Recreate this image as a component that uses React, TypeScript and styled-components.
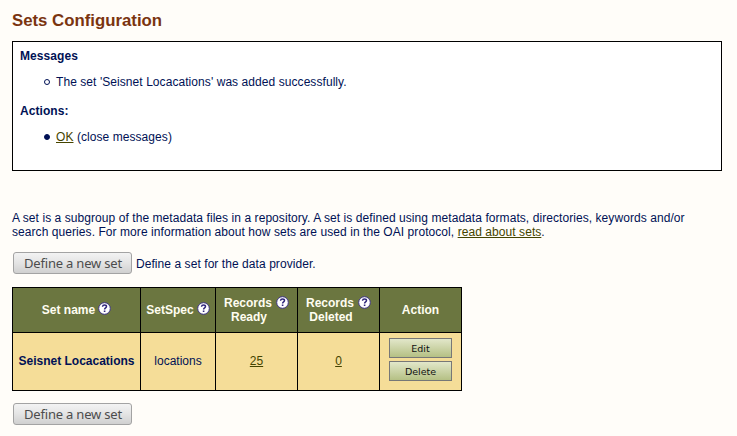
import React from 'react';
import styled, { createGlobalStyle } from 'styled-components';

const GlobalStyle = createGlobalStyle`
  body {
    margin: 0;
    background: #fffdf9;
    color: #001155;
    font: 12px/14px "Liberation Sans", Arial, sans-serif;
    letter-spacing: 0.066px;
  }
`;

const Page = styled.main`
  box-sizing: border-box;
  width: 737px;
  height: 436px;
  padding: 11px 15px 0 12px;
  overflow: hidden;
`;

const Title = styled.h1`
  margin: 0;
  height: 30px;
  font-size: 16.8px;
  line-height: 20px;
  letter-spacing: 0;
  color: #7a3410;
  white-space: nowrap;
`;

const MessageBox = styled.section`
  box-sizing: border-box;
  height: 130px;
  padding: 7px;
  border: 1px solid #000;
  background: #fff;
`;

const BoxHeading = styled.h2`
  margin: 0;
  font-size: 12px;
  line-height: 14px;
`;

const BulletList = styled.ul`
  display: flex;
  margin: 12px 0 15px;
  padding: 0 0 0 23px;
  list-style: none;
`;

const BulletItem = styled.li<{ $filled?: boolean }>`
  display: flex;
  align-items: center;
  white-space: pre;

  &::before {
    content: '';
    box-sizing: border-box;
    width: 6px;
    height: 6px;
    margin: 0 6px 0 1px;
    border: 1px solid #001155;
    border-radius: 50%;
    background: ${(p) => (p.$filled ? '#001155' : 'transparent')};
  }
`;

const Link = styled.a`
  color: #444400;
  text-decoration: underline;
`;

const Intro = styled.p`
  margin: 40px 0 13px;
  white-space: nowrap;
`;

const ActionRow = styled.div`
  display: flex;
  align-items: center;
  gap: 4px;
  height: 22px;
  padding-left: 1px;
`;

const ActionHint = styled.span`
  padding-top: 2px;
`;

const DefineButton = styled.button`
  box-sizing: border-box;
  width: 119px;
  height: 22px;
  padding: 1px 0 0 1px;
  border: 1px solid #a3a3a3;
  border-radius: 3px;
  background: linear-gradient(#f3f3f3, #e4e4e4 50%, #d0d0d0);
  color: #4c4c4c;
  font: 13px/19px "Noto Sans", sans-serif;
  letter-spacing: -0.2px;
  white-space: nowrap;
`;

const SetsTable = styled.div`
  display: grid;
  grid-template-columns: 127px 74px 81px 81px 81px;
  grid-template-rows: 44px 57px;
  gap: 1px;
  box-sizing: border-box;
  width: 450px;
  margin: 13px 0 12px;
  border: 1px solid #000;
  background: #000;
`;

const HeaderCell = styled.div`
  display: flex;
  align-items: center;
  justify-content: center;
  background: #6b7640;
  color: #fffdf0;
  font-weight: bold;
  letter-spacing: 0;
  white-space: nowrap;
`;

const HeaderLabel = styled.div<{ $raised?: boolean }>`
  text-align: center;

  svg {
    display: inline-block;
    margin: -4px 0 -1px ${(p) => (p.$raised ? 3 : 4)}px;
    vertical-align: ${(p) => (p.$raised ? '0' : '-1px')};
  }
`;

const SecondLine = styled.span`
  display: block;
  padding-right: 15px;
`;

const Cell = styled.div<{ $bold?: boolean }>`
  display: flex;
  flex-direction: column;
  align-items: center;
  justify-content: center;
  gap: 3px;
  padding-bottom: 2px;
  background: #f5dd98;
  font-weight: ${(p) => (p.$bold ? 'bold' : 'normal')};
  letter-spacing: 0;
  white-space: nowrap;
`;

const ActionCell = styled(Cell)`
  justify-content: flex-start;
  padding-top: 5px;
`;

const SmallButton = styled.button`
  box-sizing: border-box;
  width: 63px;
  height: 20px;
  padding: 1px 0 0;
  border: 1px solid #777;
  background: linear-gradient(#e2e7ca, #b5c084);
  color: #111;
  font: 9.5px/17px "DejaVu Sans", sans-serif;
`;

const HelpIcon = () => (
  <svg width="13" height="13" viewBox="0 0 13 13" aria-hidden="true">
    <circle cx="6.5" cy="6.5" r="5.8" fill="#fff" stroke="#40358a" strokeWidth="1" />
    <path d="M4.5 4.7C4.6 3.5 5.3 3 6.5 3S8.5 3.6 8.5 4.6C8.5 5.9 6.6 5.9 6.6 7.5" fill="none" stroke="#30277c" strokeWidth="1.5" />
    <rect x="5.8" y="8.5" width="1.6" height="1.5" fill="#30277c" />
  </svg>
);

export default function App() {
  return (
    <>
      <GlobalStyle />
      <Page>
        <Title>Sets Configuration</Title>
        <MessageBox>
          <BoxHeading>Messages</BoxHeading>
          <BulletList>
            <BulletItem>The set 'Seisnet Locacations' was added successfully.</BulletItem>
          </BulletList>
          <BoxHeading>Actions:</BoxHeading>
          <BulletList>
            <BulletItem $filled><Link>OK</Link> (close messages)</BulletItem>
          </BulletList>
        </MessageBox>
        <Intro>
          A set is a subgroup of the metadata files in a repository. A set is defined using metadata formats, directories, keywords and/or
          <br />
          search queries. For more information about how sets are used in the OAI protocol, <Link>read about sets</Link>.
        </Intro>
        <ActionRow>
          <DefineButton>Define a new set</DefineButton>
          <ActionHint>Define a set for the data provider.</ActionHint>
        </ActionRow>
        <SetsTable>
          <HeaderCell><HeaderLabel $raised>Set name<HelpIcon /></HeaderLabel></HeaderCell>
          <HeaderCell><HeaderLabel $raised>SetSpec<HelpIcon /></HeaderLabel></HeaderCell>
          <HeaderCell><HeaderLabel>Records<HelpIcon /><SecondLine>Ready</SecondLine></HeaderLabel></HeaderCell>
          <HeaderCell><HeaderLabel>Records<HelpIcon /><SecondLine>Deleted</SecondLine></HeaderLabel></HeaderCell>
          <HeaderCell><HeaderLabel>Action</HeaderLabel></HeaderCell>
          <Cell $bold>Seisnet Locacations</Cell>
          <Cell>locations</Cell>
          <Cell><Link>25</Link></Cell>
          <Cell><Link>0</Link></Cell>
          <ActionCell>
            <SmallButton>Edit</SmallButton>
            <SmallButton>Delete</SmallButton>
          </ActionCell>
        </SetsTable>
        <ActionRow>
          <DefineButton>Define a new set</DefineButton>
        </ActionRow>
      </Page>
    </>
  );
}
